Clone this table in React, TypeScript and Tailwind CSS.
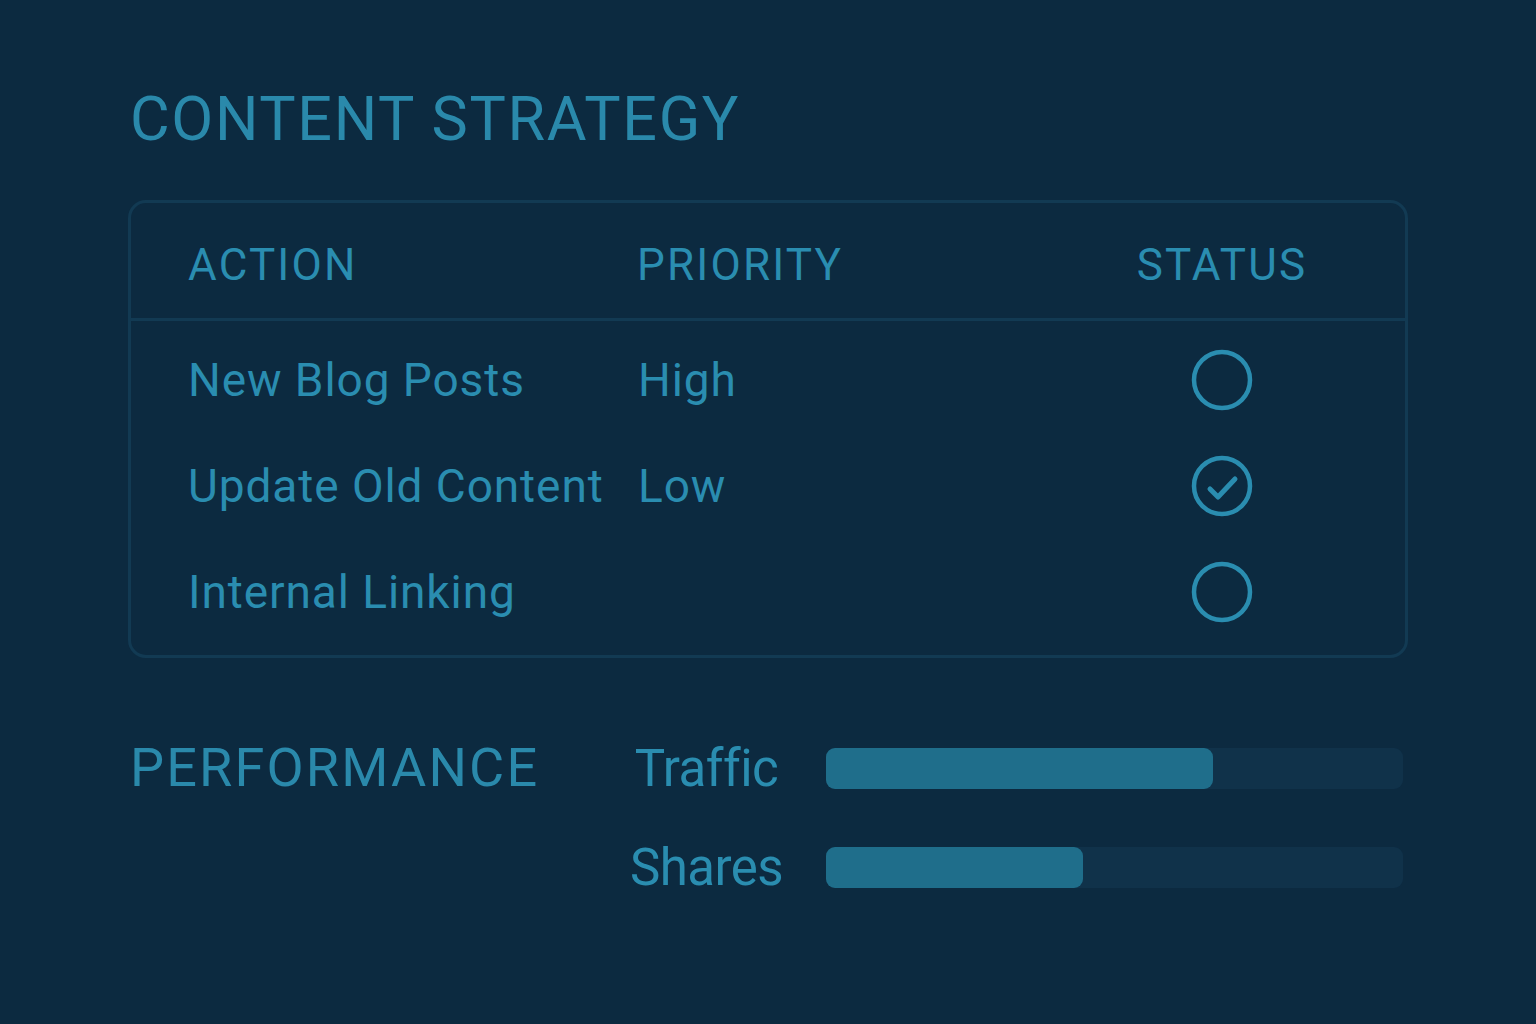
import React from 'react';

// Content strategy board: action table + performance bars
const actions = [
  { id: 1, name: 'New Blog Posts', priority: 'High', done: false },
  { id: 2, name: 'Update Old Content', priority: 'Low', done: true },
  { id: 3, name: 'Internal Linking', priority: '', done: false },
];

const metrics = [
  { id: 'traffic', label: 'Traffic', value: 67 },
  { id: 'shares', label: 'Shares', value: 44.5 },
];

const StatusIcon = ({ done }: { done: boolean }) => (
  <svg width="64" height="64" viewBox="0 0 64 64" fill="none">
    <circle cx="32" cy="32" r="28" stroke="#2a8db0" strokeWidth="4.5" />
    {done && (
      <path
        d="M20 35 L28 43 L45 25"
        stroke="#2a8db0"
        strokeWidth="5"
        strokeLinecap="round"
        strokeLinejoin="round"
      />
    )}
  </svg>
);

const App = () => {
  return (
    <div className="min-h-screen w-full bg-[#0c2a40] font-['Roboto',sans-serif] text-[#2a8db0]">
      <div className="pl-[128px] pr-[128px] pt-[84px]">
        <h1 className="pl-[2px] text-[61px] leading-[70px] font-normal tracking-[0.027em] text-[#2a89ab]">
          CONTENT STRATEGY
        </h1>

        <div className="mt-[46px] w-[1280px] rounded-[18px] border-[3px] border-[#123a53]">
          <div className="grid h-[118px] grid-cols-[449px_1fr_200px] items-center border-b-[3px] border-[#123a53] pl-[57px] pr-[83px] pt-[8px] text-[44px] tracking-[0.05em]">
            <span>ACTION</span>
            <span>PRIORITY</span>
            <span className="text-center">STATUS</span>
          </div>
          <div className="pt-[6px] pb-[10px]">
            {actions.map((a) => (
              <div
                key={a.id}
                className="grid h-[106px] grid-cols-[449px_1fr_200px] items-center pl-[57px] pr-[83px] text-[46px] tracking-[0.02em]"
              >
                <span className="whitespace-nowrap">{a.name}</span>
                <span className="pl-[1px]">{a.priority}</span>
                <span className="flex justify-center">
                  <StatusIcon done={a.done} />
                </span>
              </div>
            ))}
          </div>
        </div>

        <div className="mt-[78px] flex">
          <div className="w-[500px] pl-[2px] text-[54px] leading-[64px] tracking-[0.04em] text-[#2a89ab]">
            PERFORMANCE
          </div>
          <div className="mt-[12px] flex flex-col gap-[58px]">
            {metrics.map((m) => (
              <div key={m.id} className="flex items-center">
                <span className="w-[157px] text-center text-[51px] leading-[41px] tracking-[-0.01em]">{m.label}</span>
                <div className="ml-[41px] h-[41px] w-[577px] rounded-[9px] bg-[#10324a]">
                  <div
                    className="h-full rounded-[9px] bg-[#1f6e8b]"
                    style={{ width: `${m.value}%` }}
                  />
                </div>
              </div>
            ))}
          </div>
        </div>
      </div>
    </div>
  );
};

export default App;
